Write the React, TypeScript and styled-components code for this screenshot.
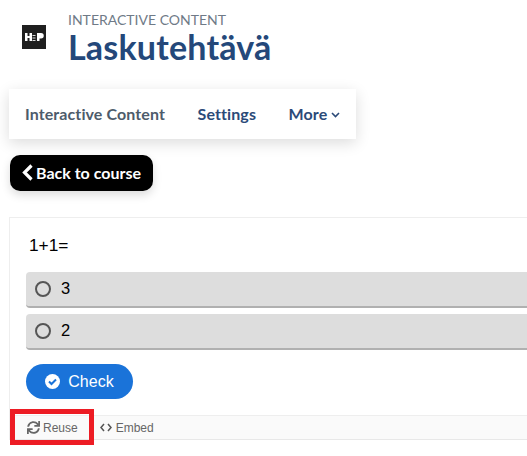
import React from "react";
import styled, { createGlobalStyle } from "styled-components";
import { FaSync } from "react-icons/fa";

const Global = createGlobalStyle`
  html, body { margin: 0; padding: 0; background: #fff; overflow: hidden; }
  body { width: 527px; height: 456px; font-family: "Lato", sans-serif; }
`;
const Page = styled.div`
  width: 527px; height: 456px; overflow: hidden; display: flex; flex-direction: column; align-items: flex-start;
`;
const Header = styled.header`
  display: flex; align-items: flex-start; padding: 11px 0 0 22px; height: 89px; box-sizing: border-box;
`;
const Logo = styled.svg`
  width: 24px; height: 24px; margin-top: 14px; flex: none;
`;
const HeaderText = styled.div`
  margin-left: 22px; display: flex; flex-direction: column;
`;
const Overline = styled.div`
  font-size: 14px; line-height: 18px; color: #6f7a87;
`;
const Title = styled.h1`
  margin: 0; font-size: 34px; line-height: 36px; font-weight: 700; color: #24487a; letter-spacing: .2px;
`;
const Nav = styled.nav`
  margin-left: 9px; width: 347px; height: 50px; display: flex; align-items: center; padding: 0 0 2px 16px; gap: 32.5px;
  box-sizing: border-box; background: #fff; box-shadow: 0 4px 14px rgba(0,0,0,.14);
`;
const NavItem = styled.a<{ $muted?: boolean }>`
  font-size: 16px; letter-spacing: .1px; font-weight: 700; color: ${p => (p.$muted ? "#4d5b6b" : "#2b4a78")}; display: flex; align-items: center; gap: 4px;
`;
const Caret = styled.svg`
  margin-top: 3px;
`;
const BackButton = styled.a`
  margin: 16px 0 0 10px; width: 143px; height: 36px; background: #000; color: #fff; border-radius: 10px;
  display: flex; align-items: center; justify-content: center; gap: 3px; font-size: 16px; font-weight: 700; padding-bottom: 2px; box-sizing: border-box;
  box-shadow: 0 4px 10px rgba(0,0,0,.14);
`;
const Card = styled.section`
  margin: 26px 0 0 9px; width: 540px; border: 1px solid #eee; border-bottom: 0; box-sizing: border-box;
  font-family: "Liberation Sans", Arial, sans-serif; background: #fff;
`;
const Content = styled.div`
  padding: 0 0 0 16px;
`;
const Question = styled.div`
  font-size: 17.3px; line-height: 20px; color: #000; padding: 17px 0 0 3px; height: 54px; box-sizing: border-box;
`;
const Option = styled.div`
  height: 36px; margin-bottom: 6px; background: #ddd; border-radius: 4px 0 0 4px; border-bottom: 2px solid #b0b0b0;
  display: flex; align-items: center; padding: 0 0 1px 9px; font-size: 16.5px; color: #000; gap: 10px; box-sizing: border-box;
`;
const Radio = styled.span`
  width: 16px; height: 16px; border: 2px solid #555; border-radius: 50%; box-sizing: border-box; flex: none;
`;
const CheckButton = styled.button`
  margin-top: 14px; width: 107px; height: 35px; border: 0; border-radius: 18px; background: #1a73d9; color: #fff;
  display: flex; align-items: center; justify-content: center; gap: 8px; font: 16px "Liberation Sans", Arial, sans-serif; padding: 0;
`;
const Footer = styled.div`
  margin-top: 16px; height: 23px; background: #fafafa; border-top: 1px solid #eee; border-bottom: 1px solid #e8e8e8; box-sizing: content-box;
  display: flex; align-items: center; font-size: 12px; color: #666; position: relative; width: 100%;
`;
const FooterAction = styled.span`
  display: flex; align-items: center; gap: 3px; padding-left: 17px;
  & + & { padding-left: 22px; gap: 4px; }
`;
const Highlight = styled.div`
  position: absolute; left: 0; top: -7px; width: 84px; height: 36px; border: 5px solid #ed1c24; box-sizing: border-box;
`;

export default function App() {
  return (
    <Page>
      <Global />
      <Header>
        <Logo viewBox="0 0 24 24" aria-hidden="true">
          <rect width="24" height="24" fill="#1f1f1f" />
          <path d="M3 8h2.5v3h2V8H10v8H7.5v-3h-2v3H3z M15 8h4a2.5 2.5 0 0 1 0 5.5h-1.5V16H15z" fill="#fff" />
          <path d="M10.5 10h3v1h-3z M10.5 12.5h3v1h-3z M10.5 15h3v1h-3z" fill="#ddd" />
        </Logo>
        <HeaderText>
          <Overline>INTERACTIVE CONTENT</Overline>
          <Title>Laskutehtävä</Title>
        </HeaderText>
      </Header>
      <Nav>
        <NavItem $muted>Interactive Content</NavItem>
        <NavItem>Settings</NavItem>
        <NavItem>
          More
          <Caret width="9" height="6" viewBox="0 0 9 6" fill="none" stroke="#2b4a78" strokeWidth="1.6"><path d="M1 1l3.5 3.5L8 1" /></Caret>
        </NavItem>
      </Nav>
      <BackButton>
        <svg width="11" height="17" viewBox="0 0 11 17" fill="none" stroke="#fff" strokeWidth="3.2"><path d="M9.5 1.5L2.5 8.5l7 7" /></svg>
        Back to course
      </BackButton>
      <Card>
        <Content>
          <Question>1+1=</Question>
          <Option><Radio />3</Option>
          <Option><Radio />2</Option>
          <CheckButton>
            <svg width="15" height="15" viewBox="0 0 15 15"><circle cx="7.5" cy="7.5" r="7.5" fill="#fff" /><path d="M4 7.5l2.5 2.5L11 5.5" fill="none" stroke="#1a73d9" strokeWidth="2" /></svg>
            Check
          </CheckButton>
        </Content>
        <Footer>
          <FooterAction>
            <FaSync size={13} color="#666" />
            Reuse
          </FooterAction>
          <FooterAction>
            <svg width="12" height="9" viewBox="0 0 12 9" fill="none" stroke="#555" strokeWidth="1.5"><path d="M4 1L1 4.5 4 8M8 1l3 3.5L8 8" /></svg>
            Embed
          </FooterAction>
          <Highlight />
        </Footer>
      </Card>
    </Page>
  );
}
